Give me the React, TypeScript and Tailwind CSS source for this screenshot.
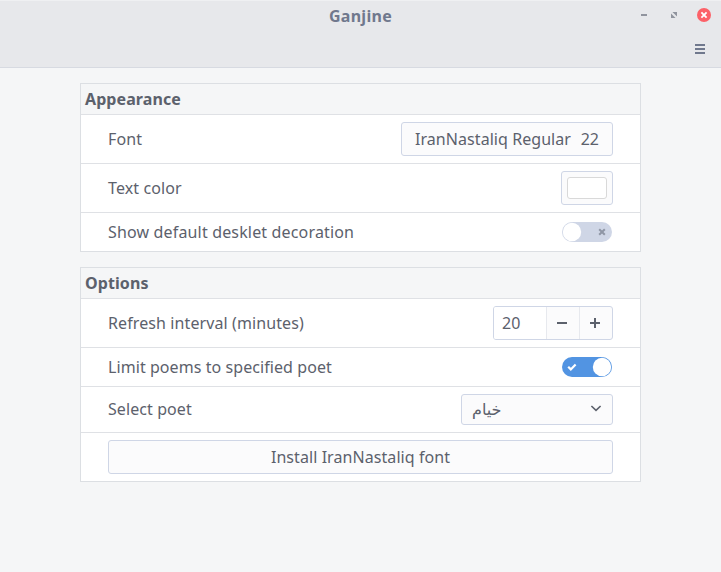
import type { ReactNode } from "react";

const control = "box-border rounded-[3px] border border-[#cfd6e6] bg-[#fbfbfc]";

function Section({ title, children }: { title: string; children: ReactNode }) {
  return (
    <section className="w-[561px] border border-[#dcdfe3] bg-white">
      <h2 className="flex h-[30px] items-center bg-[#f5f6f7] pl-1 font-bold tracking-[0.08px]">{title}</h2>
      {children}
    </section>
  );
}

type RowProps = { label?: string; height: string; labelClass?: string; children: ReactNode };

function Row({ label, height, labelClass = "", children }: RowProps) {
  return (
    <div className={`box-content flex items-center justify-between border-t border-[#dfe1e5] px-[27px] ${height}`}>
      {label && <span className={labelClass}>{label}</span>}
      {children}
    </div>
  );
}

function Switch({ on }: { on: boolean }) {
  return (
    <svg className="mr-px" width="50" height="20" viewBox="0 0 50 20">
      <rect width="50" height="20" rx="10" fill={on ? "#5294e2" : "#cfd6e6"} />
      <circle cx={on ? 40 : 10} cy="10" r="9.2" fill="#fff" />
      {on ? (
        <path d="M6.2 9.8l2.6 2.6 4.8-5" fill="none" stroke="#fff" strokeWidth="2.2" />
      ) : (
        <path d="M37.2 7.2l5.6 5.6M42.8 7.2l-5.6 5.6" fill="none" stroke="#8f96a5" strokeWidth="2" />
      )}
    </svg>
  );
}

export default function App() {
  return (
    <div className="flex h-[572px] w-[721px] flex-col bg-[#f5f6f7] font-['Noto_Sans','DejaVu_Sans',sans-serif] text-[16px] leading-[22px] text-[#5c616c]">
      <header className="h-[68px] border-b border-[#d7dae1] bg-[#e7e8eb] shadow-[inset_0_1px_#eff0f2]">
        <div className="grid h-8 grid-cols-[1fr_auto_1fr] items-center">
          <span />
          <h1 className="font-bold tracking-[0.3px] text-[#70788d]">Ganjine</h1>
          <svg className="justify-self-end" width="81" height="32" viewBox="0 0 81 32">
            <path d="M1 14h6v2H1z" fill="#90949e" />
            <path d="M32.4 12H37v4.6zM31 13.4V18h4.6z" fill="#90949e" />
            <circle cx="64" cy="15" r="7" fill="#fc6168" />
            <path d="M61.4 12.4l5.2 5.2M66.6 12.4l-5.2 5.2" stroke="#fff" strokeWidth="1.8" />
          </svg>
        </div>
        <div className="flex h-[35px] items-center justify-end pr-4">
          <svg width="10" height="10" viewBox="0 0 10 10" className="mb-[1px]">
            <path d="M0 0h10v2H0zM0 4h10v2H0zM0 8h10v2H0z" fill="#70788d" />
          </svg>
        </div>
      </header>
      <main className="flex flex-col items-center gap-[15px] pt-[15px]">
        <Section title="Appearance">
          <Row label="Font" height="h-12" labelClass="tracking-[0.1px]">
            <button className={`${control} flex h-[34px] w-[212px] items-center justify-between px-[13px]`}>
              <span className="tracking-[0.06px]">IranNastaliq Regular</span>
              <span>22</span>
            </button>
          </Row>
          <Row label="Text color" height="h-12" labelClass="tracking-[0.1px]">
            <button className={`${control} flex h-[34px] w-[52px] items-center justify-center`}>
              <span className="h-[22px] w-10 rounded-[3px] border border-[#d9d9d9] bg-white" />
            </button>
          </Row>
          <Row label="Show default desklet decoration" height="h-[38px]" labelClass="tracking-[0.16px]">
            <Switch on={false} />
          </Row>
        </Section>
        <Section title="Options">
          <Row label="Refresh interval (minutes)" height="h-12" labelClass="tracking-[0.1px]">
            <div className={`${control} flex h-[34px] w-[120px] overflow-hidden`}>
              <span className="flex flex-1 items-center bg-white pl-2">20</span>
              <button className="flex w-[33px] items-center justify-center border-l border-[#e7e9ee] pr-0.5">
                <svg width="10" height="10" viewBox="0 0 10 10">
                  <path d="M0 4h10v2H0z" fill="#5c616c" />
                </svg>
              </button>
              <button className="flex w-[33px] items-center justify-center border-l border-[#e7e9ee] pr-0.5">
                <svg width="10" height="10" viewBox="0 0 10 10">
                  <path d="M0 4h10v2H0zM4 0h2v10H4z" fill="#5c616c" />
                </svg>
              </button>
            </div>
          </Row>
          <Row label="Limit poems to specified poet" height="h-[38px]" labelClass="tracking-[0.07px]">
            <Switch on />
          </Row>
          <Row label="Select poet" height="h-[45px]" labelClass="pb-0.5 tracking-[0.08px]">
            <button className={`${control} flex h-[31px] w-[152px] items-center justify-between px-[10px]`}>
              <span lang="fa" dir="rtl" className="font-['DejaVu_Sans',sans-serif]">خیام</span>
              <svg width="12" height="8" viewBox="0 0 12 8" className="mb-[3px]">
                <path d="M1.4 2L6 6.4 10.6 2" fill="none" stroke="#5c616c" strokeWidth="1.6" />
              </svg>
            </button>
          </Row>
          <Row height="h-12">
            <button className={`${control} h-[34px] w-full tracking-[0.07px]`}>Install IranNastaliq font</button>
          </Row>
        </Section>
      </main>
    </div>
  );
}
